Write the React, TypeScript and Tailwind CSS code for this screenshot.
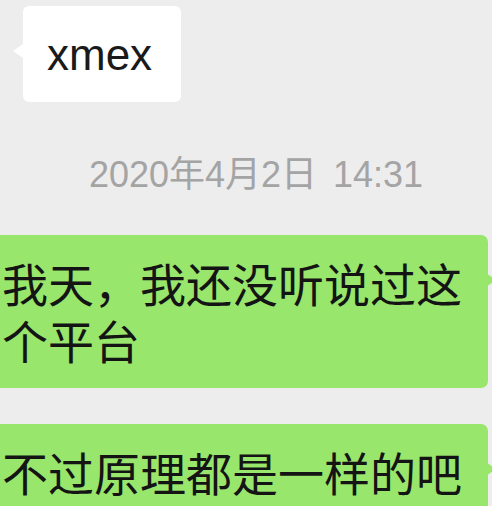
export default function App() {
  return (
    <div
      className="w-[492px] h-[506px] overflow-hidden bg-[#ededed]"
      style={{ fontFamily: '"Liberation Sans", "Noto Sans CJK SC", sans-serif' }}
    >
      {/* incoming message */}
      <div className="pt-[6px] pl-[23px]">
        <div className="relative w-[158px] rounded-[6px] bg-white pl-[24px] pt-[27px] pb-[25px] text-[44px] leading-none text-[#1a1a1a]">
          <span className="absolute left-[-10px] top-[38px] h-0 w-0 border-y-[7px] border-r-[10px] border-y-transparent border-r-white" />
          xmex
        </div>
      </div>

      {/* timestamp */}
      <div className="mt-[55px] flex justify-center pl-[20px] text-[36px] leading-none text-[#a4a4a4]">
        <span>2020年4月2日</span>
        <span className="ml-[16px]">14:31</span>
      </div>

      {/* outgoing messages */}
      <div
        className="mt-[42px] flex flex-col items-end gap-[36px] pr-[4px]"
        style={{ fontFamily: '"Noto Sans CJK SC", "Liberation Sans", sans-serif' }}
      >
        <div className="relative -ml-[30px] rounded-[7px] bg-[#98e66b] pl-[32px] pr-[24px] pt-[19px] pb-[20px] text-[46px] leading-[57px] text-[#141414]">
          <span className="absolute right-[-8px] top-[38px] h-0 w-0 border-y-[7px] border-l-[10px] border-y-transparent border-l-[#98e66b]" />
          我天，我还没听说过这个平台
        </div>
        <div className="relative -ml-[30px] w-[calc(100%+30px)] rounded-[7px] bg-[#98e66b] pl-[32px] pr-[24px] pt-[19px] pb-[22px] text-[46px] leading-[57px] text-[#141414]">
          <span className="absolute right-[-8px] top-[38px] h-0 w-0 border-y-[7px] border-l-[10px] border-y-transparent border-l-[#98e66b]" />
          不过原理都是一样的吧
        </div>
      </div>
    </div>
  )
}
